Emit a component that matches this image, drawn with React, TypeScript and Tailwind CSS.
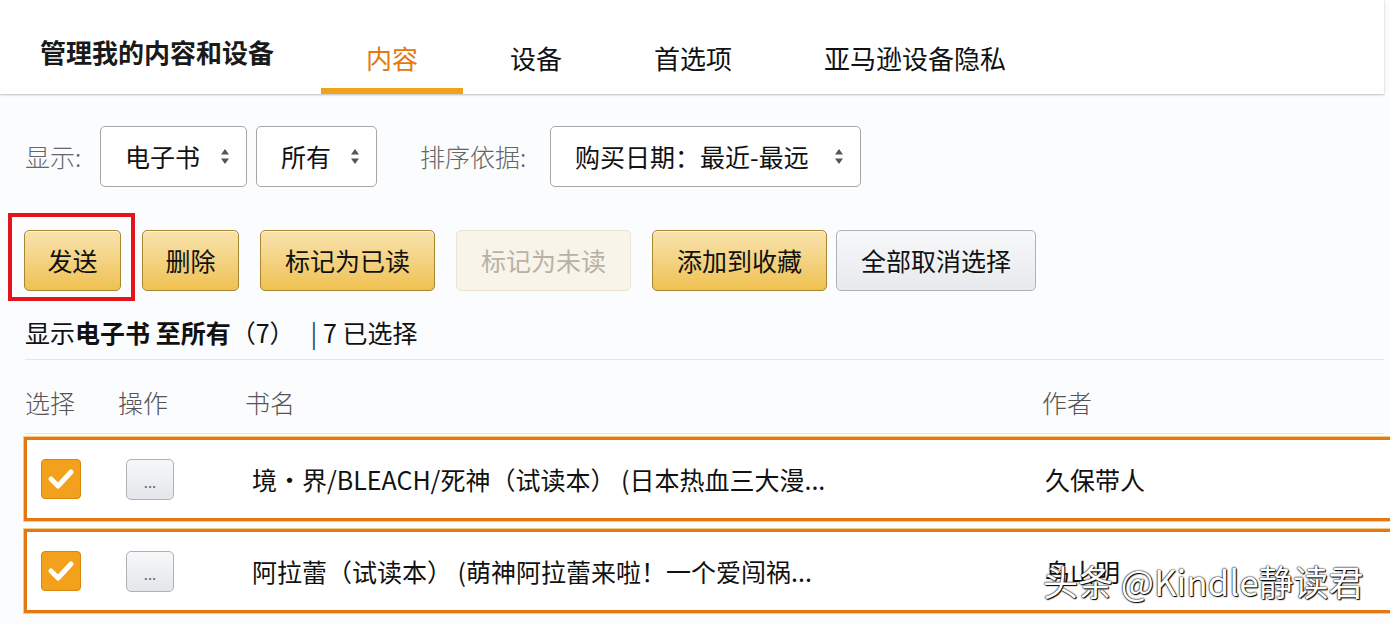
import React from "react";

const F = { fontFamily: '"Noto Sans CJK SC", "Noto Sans", sans-serif' };

function Arrows() {
  return (
    <svg width="10" height="17" viewBox="0 0 10 17" className="shrink-0">
      <path d="M5 1 L9 6.5 H1 Z" fill="#555" />
      <path d="M5 16 L9 10.5 H1 Z" fill="#555" />
    </svg>
  );
}

function Select({ label, w }: { label: string; w: string }) {
  return (
    <div
      className={`${w} h-[61px] flex items-center justify-between pl-[24px] pr-[16px] bg-white border border-[#a6a6a6] rounded-[5px] text-[25px] text-[#111]`}
    >
      <span className="leading-none">{label}</span>
      <Arrows />
    </div>
  );
}

function YBtn({ label, w, cls = "" }: { label: string; w: string; cls?: string }) {
  return (
    <div
      className={`${w} h-[61px] flex items-center justify-center rounded-[5px] border border-[#a88734] bg-gradient-to-b from-[#f8e3ad] to-[#efc14e] text-[25px] text-[#111] shadow-[inset_0_1px_0_rgba(255,255,255,0.6)] ${cls}`}
    >
      {label}
    </div>
  );
}

function Check() {
  return (
    <div className="w-[40px] h-[40px] rounded-[4px] bg-[#f3a01c] border border-[#d9870a] flex items-center justify-center">
      <svg width="28" height="24" viewBox="0 0 28 24">
        <path d="M4 12 L11 19 L24 5" fill="none" stroke="#fff" strokeWidth="5" strokeLinecap="round" strokeLinejoin="round" />
      </svg>
    </div>
  );
}

function Dots() {
  return (
    <div className="w-[48px] h-[41px] rounded-[5px] border border-[#adb1b8] bg-gradient-to-b from-[#f7f8fa] to-[#e3e6ea] flex items-center justify-center text-[15px] text-[#666] leading-none pt-[4px]">
      ...
    </div>
  );
}

function Row({ title, author }: { title: string; author: string }) {
  return (
    <div className="relative h-[84px] ml-[24px] mr-[-20px] border-[3px] border-[#e47911] bg-white flex items-center shadow-[0_0_0_1px_#f6c98f]">
      <div className="w-[99px] pl-[14px] flex items-center">
        <Check />
      </div>
      <div className="w-[126px] flex items-center">
        <Dots />
      </div>
      <div className="w-[793px] text-[25px] text-[#111] leading-none whitespace-nowrap">{title}</div>
      <div className="text-[25px] text-[#111] leading-none">{author}</div>
    </div>
  );
}

export default function App() {
  return (
    <div className="w-[1390px] h-[624px] overflow-hidden bg-[#fbfcfe] relative" style={F}>
      <div className="w-[1384px] h-[94px] bg-white flex items-stretch shadow-[0_1px_2px_rgba(0,0,0,0.25)] relative z-10">
        <div className="pl-[40px] pr-[47px] pt-[39px] text-[26px] leading-[26px] font-bold text-[#1a1a1a]">
          管理我的内容和设备
        </div>
        <div className="flex gap-[2px]">
          <div className="px-[45px] pt-[45px] leading-[26px] border-b-[6px] border-[#f0a31a] text-[26px] text-[#e47911]">内容</div>
          <div className="px-[45px] pt-[45px] leading-[26px] border-b-[6px] border-transparent text-[26px] text-[#111]">设备</div>
          <div className="px-[45px] pt-[45px] leading-[26px] border-b-[6px] border-transparent text-[26px] text-[#111]">首选项</div>
          <div className="px-[45px] pt-[45px] leading-[26px] border-b-[6px] border-transparent text-[26px] text-[#111]">亚马逊设备隐私</div>
        </div>
      </div>

      <div className="flex items-center mt-[32px] pl-[25px]">
        <span className="text-[25px] text-[#666] font-light w-[75px]">显示:</span>
        <Select label="电子书" w="w-[147px]" />
        <div className="w-[9px]" />
        <Select label="所有" w="w-[121px]" />
        <span className="text-[25px] text-[#666] font-light ml-[43px] w-[130px]">排序依据:</span>
        <Select label="购买日期：最近-最远" w="w-[311px]" />
      </div>

      <div className="flex items-center mt-[43px] pl-[24px]">
        <div className="relative">
          <YBtn label="发送" w="w-[97px]" />
          <div className="absolute left-[-16px] top-[-17px] w-[127px] h-[88px] border-[4px] border-[#e3141c]" />
        </div>
        <YBtn label="删除" w="w-[97px]" cls="ml-[21px]" />
        <YBtn label="标记为已读" w="w-[175px]" cls="ml-[21px]" />
        <div className="w-[175px] h-[61px] ml-[21px] flex items-center justify-center rounded-[5px] border border-[#ebe4d3] bg-[#f8f4ea] text-[25px] text-[#b9b2a4]">
          标记为未读
        </div>
        <YBtn label="添加到收藏" w="w-[175px]" cls="ml-[21px]" />
        <div className="w-[200px] h-[61px] ml-[9px] flex items-center justify-center rounded-[5px] border border-[#adb1b8] bg-gradient-to-b from-[#f7f8fa] to-[#e7e9ec] text-[25px] text-[#111]">
          全部取消选择
        </div>
      </div>

      <div className="ml-[25px] mr-[6px] mt-[26px] pb-[12px] border-b border-[#e3e6ea] text-[25px] text-[#111] leading-[30px] whitespace-nowrap">
        显示<span className="font-bold">电子书 至所有</span>（7）<span className="ml-[16px] text-[#2d4b6b]">|</span> 7 已选择
      </div>

      <div className="ml-[25px] mr-[6px] h-[74px] flex items-center border-b border-[#e3e6ea] text-[25px] text-[#555] font-light pt-[12px]">
        <div className="w-[93px]">选择</div>
        <div className="w-[127px]">操作</div>
        <div className="w-[797px]">书名</div>
        <div>作者</div>
      </div>

      <div className="mt-[3px] flex flex-col gap-[8px]">
        <Row title="境·界/BLEACH/死神（试读本） (日本热血三大漫..." author="久保带人" />
        <Row title="阿拉蕾（试读本） (萌神阿拉蕾来啦！一个爱闯祸..." author="鸟山明" />
      </div>

      <div className="absolute left-[1043px] top-[563px] text-[35px] text-white leading-none whitespace-nowrap [text-shadow:0_0_1px_#000,0_0_2px_#000,1px_1px_1px_#000]">
        头条 @Kindle静读君
      </div>
    </div>
  );
}
